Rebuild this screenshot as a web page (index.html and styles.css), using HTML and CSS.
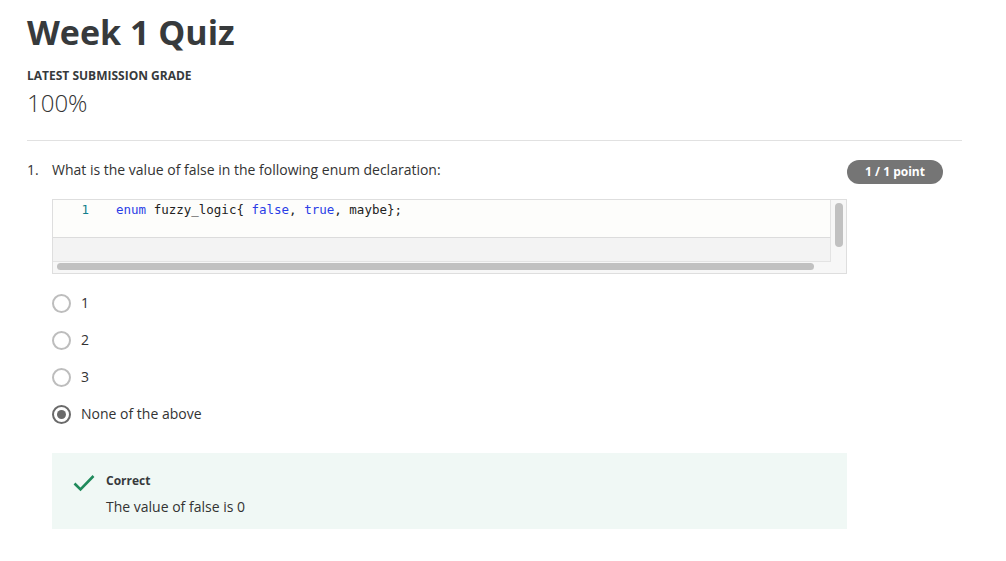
FILE: index.html
```html
<!DOCTYPE html>
<html>
<head>
<meta charset="utf-8">
<link rel="stylesheet" href="styles.css">
</head>
<body>
<div class="page">
  <h1 class="title">Week 1 Quiz</h1>
  <div class="grade-label">LATEST SUBMISSION GRADE</div>
  <div class="grade">100%</div>
  <hr class="divider">
  <div class="question">
    <div class="q-head">
      <span class="q-num">1.</span>
      <span class="q-text">What is the value of false in the following enum declaration:</span>
      <span class="badge">1 / 1 point</span>
    </div>
    <div class="q-body">
      <div class="code">
        <div class="code-main">
          <div class="code-lines">
            <span class="ln">1</span>
            <span class="src"><span class="kw">enum</span> fuzzy_logic{ <span class="kw">false</span>, <span class="kw">true</span>, maybe};</span>
          </div>
          <div class="code-gap"></div>
          <div class="hscroll"><div class="hthumb"></div></div>
        </div>
        <div class="vscroll"><div class="vthumb"></div></div>
      </div>
      <div class="options">
        <div class="opt"><span class="radio"></span><span class="opt-label">1</span></div>
        <div class="opt"><span class="radio"></span><span class="opt-label">2</span></div>
        <div class="opt"><span class="radio"></span><span class="opt-label">3</span></div>
        <div class="opt"><span class="radio checked"></span><span class="opt-label">None of the above</span></div>
      </div>
      <div class="feedback">
        <svg class="check" width="22" height="18" viewBox="0 0 22 18"><path d="M1.5 9.5 L7.5 15.5 L20.5 2" fill="none" stroke="#1f8a5b" stroke-width="2.6"/></svg>
        <div class="fb-text">
          <div class="fb-title">Correct</div>
          <div class="fb-msg">The value of false is 0</div>
        </div>
      </div>
    </div>
  </div>
</div>
</body>
</html>
```

FILE: styles.css
```css
html, body {
  margin: 0;
  padding: 0;
  background: #fff;
}
body {
  font-family: "Open Sans", "Noto Sans", sans-serif;
  color: #333;
}
.page {
  padding: 0 44px 0 27px;
}
.title {
  margin: 0;
  padding-top: 8px;
  font-size: 34px;
  line-height: 48px;
  font-weight: 700;
  color: #373a3c;
}
.grade-label {
  margin-top: 12px;
  font-size: 12px;
  line-height: 16px;
  font-weight: 700;
  color: #373a3c;
}
.grade {
  margin-top: 3px;
  font-size: 24px;
  line-height: 32px;
  font-weight: 300;
  color: #333;
}
.divider {
  margin: 21px 0 0 0;
  border: 0;
  border-top: 1px solid #e1e1e1;
  height: 0;
}
.question {
  padding-top: 17px;
}
.q-head {
  display: flex;
  align-items: flex-start;
  padding-right: 19px;
}
.q-num {
  width: 25px;
  font-size: 14px;
  line-height: 24px;
}
.q-text {
  flex: 1;
  font-size: 14px;
  line-height: 24px;
}
.badge {
  margin-top: 2px;
  margin-bottom: -2px;
  width: 96px;
  height: 24px;
  border-radius: 12px;
  background: #757575;
  color: #fff;
  font-size: 12px;
  font-weight: 700;
  line-height: 24px;
  text-align: center;
}
.q-body {
  padding-left: 25px;
  width: 795px;
}
.code {
  margin-top: 17px;
  display: flex;
  height: 73px;
  border: 1px solid #dedede;
  background: #f7f7f7;
}
.code-main {
  width: 778px;
  display: flex;
  flex-direction: column;
}
.code-lines {
  height: 37px;
  background: #fdfdfb;
  border-bottom: 1px solid #dcdcdc;
  border-right: 1px solid #e3e3e3;
  display: flex;
  font-family: "DejaVu Sans Mono", "Liberation Mono", monospace;
  font-size: 12.5px;
  line-height: 20px;
  color: #222;
}
.ln {
  width: 36px;
  text-align: right;
  color: #127e8c;
}
.src {
  margin-left: 27px;
  white-space: pre;
}
.kw {
  color: #2a3ee6;
}
.code-gap {
  height: 23px;
  background: #f3f3f3;
  border-right: 1px solid #e3e3e3;
  border-bottom: 1px solid #e3e3e3;
}
.hscroll {
  flex: 1;
  padding: 1px 0 0 4px;
}
.hthumb {
  width: 757px;
  height: 7px;
  border-radius: 4px;
  background: #c1c1c1;
}
.vscroll {
  flex: 1;
  padding: 3px 0 0 4px;
}
.vthumb {
  width: 8px;
  height: 44px;
  border-radius: 4px;
  background: #c1c1c1;
}
.options {
  padding-top: 19px;
  display: flex;
  flex-direction: column;
  gap: 17px;
}
.opt {
  display: flex;
  align-items: center;
  height: 20px;
}
.radio {
  box-sizing: border-box;
  width: 19px;
  height: 19px;
  border: 2px solid #bdbdbd;
  border-radius: 50%;
  display: flex;
  align-items: center;
  justify-content: center;
}
.radio.checked {
  border-color: #6a6a6a;
}
.radio.checked::after {
  content: "";
  width: 9px;
  height: 9px;
  border-radius: 50%;
  background: #6a6a6a;
}
.opt-label {
  margin-left: 10px;
  font-size: 14px;
  line-height: 20px;
  color: #333;
}
.feedback {
  margin-top: 29px;
  height: 76px;
  box-sizing: border-box;
  background: #f0f8f5;
  display: flex;
  padding: 19px 0 0 21px;
}
.check {
  margin-top: 2px;
}
.fb-text {
  margin-left: 11px;
}
.fb-title {
  font-size: 12px;
  font-weight: 700;
  line-height: 18px;
  color: #373a3c;
}
.fb-msg {
  margin-top: 7px;
  font-size: 14px;
  line-height: 20px;
  color: #333;
}
```
